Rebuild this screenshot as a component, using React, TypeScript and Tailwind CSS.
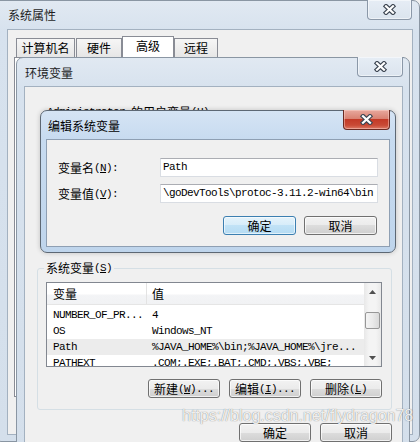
import React from "react";

const cjk = "font-['Noto_Sans_CJK_SC',sans-serif]";
const mono = "font-['Liberation_Mono','Noto_Sans_CJK_SC',monospace] text-[11px] tracking-[-0.6px]";

function XGlyph() {
  return (
    <svg width="13" height="11" viewBox="0 0 13 11">
      <path d="M3 2.2 L10 8.8 M10 2.2 L3 8.8" stroke="#3d4652" strokeWidth="4.4" strokeLinecap="square" />
      <path d="M3 2.2 L10 8.8 M10 2.2 L3 8.8" stroke="#ffffff" strokeWidth="2.2" strokeLinecap="square" />
    </svg>
  );
}

function CloseInactive({ w }: { w: string }) {
  return (
    <div
      className={`-mt-px flex h-[20px] ${w} items-center justify-center rounded-b-[4px] border border-t-0 border-[#8b98a8] bg-[linear-gradient(#e6edf5,#dbe4ee)] shadow-[inset_0_0_0_1px_rgba(255,255,255,0.5)]`}
    >
      <XGlyph />
    </div>
  );
}

function CloseActive() {
  return (
    <div className="-mt-px flex h-[20px] w-[47px] items-center justify-center rounded-b-[4px] border border-t-0 border-[#6a2a22] bg-[linear-gradient(#e8a99e_0%,#d98273_45%,#c33a27_50%,#c94a35_80%,#dd7a66_100%)] shadow-[inset_0_0_0_1px_rgba(255,220,210,0.45)]">
      <XGlyph />
    </div>
  );
}

function Btn({ children, def, w }: { children: React.ReactNode; def?: boolean; w: string }) {
  return (
    <div
      className={`flex h-[19px] ${w} items-center justify-center rounded-[3px] border text-[12px] leading-[14px] text-black ${
        def
          ? "border-[#3c7fb1] bg-[linear-gradient(#e5f3fb_0%,#d6ecf9_50%,#c1e2f6_50%,#b4dbf3_100%)] shadow-[inset_0_0_0_1px_rgba(255,255,255,0.6)]"
          : "border-[#707070] bg-[linear-gradient(#f2f2f2_0%,#ebebeb_50%,#dddddd_50%,#cfcfcf_100%)] shadow-[inset_0_0_0_1px_rgba(255,255,255,0.7)]"
      }`}
    >
      {children}
    </div>
  );
}

function Arrow({ up }: { up?: boolean }) {
  return (
    <div className="flex h-[17px] items-center justify-center">
      <svg width="7" height="4" viewBox="0 0 7 4">
        <path d={up ? "M0 4 L3.5 0 L7 4Z" : "M0 0 L3.5 4 L7 0Z"} fill="#505050" />
      </svg>
    </div>
  );
}

const rows: { name: string; value: string; sel?: boolean }[] = [
  { name: "NUMBER_OF_PR...", value: "4" },
  { name: "OS", value: "Windows_NT" },
  { name: "Path", value: "%JAVA_HOME%\\bin;%JAVA_HOME%\\jre...", sel: true },
  { name: "PATHEXT", value: ".COM;.EXE;.BAT;.CMD;.VBS;.VBE;" },
];

export default function App() {
  return (
    <div className={`relative h-[442px] w-[420px] overflow-hidden bg-[#f0f0f0] text-black ${cjk}`}>
      {/* Window A: 系统属性 */}
      <div className="absolute left-[-6px] top-0 h-[442px] w-[426px] rounded-b-[7px] rounded-tr-[7px] border border-[#8a96a3] bg-[linear-gradient(#e1e9f2,#d7e2ee_30px,#d4dfeb)]">
        <div className="flex h-[28px] items-start justify-between">
          <span className="pl-[13px] pt-[7px] text-[12px] leading-[14px] text-[#1e1e1e]">系统属性</span>
          <div className="mr-[7px]">
            <CloseInactive w="w-[45px]" />
          </div>
        </div>
        <div className="ml-[12px] mr-[6px] h-[406px] border border-[#a3b1c0] bg-[#f0f0f0]">
          <div className="ml-[8px] mt-[6px] flex h-[21px] items-end">
            <div className="flex h-[19px] w-[59px] items-center justify-center border border-b-0 border-[#898c95] bg-[linear-gradient(#f6f6f6,#e6e6e6)] text-[12px] leading-[14px]">
              计算机名
            </div>
            <div className="ml-px flex h-[19px] w-[46px] items-center justify-center border border-b-0 border-[#898c95] bg-[linear-gradient(#f6f6f6,#e6e6e6)] text-[12px] leading-[14px]">
              硬件
            </div>
            <div className="flex h-[21px] w-[52px] items-center justify-center border border-b-0 border-[#898c95] bg-white pb-[2px] text-[12px] leading-[14px]">
              高级
            </div>
            <div className="flex h-[19px] w-[44px] items-center justify-center border border-b-0 border-[#898c95] bg-[linear-gradient(#f6f6f6,#e6e6e6)] text-[12px] leading-[14px]">
              远程
            </div>
          </div>
          <div className="ml-[6px] mr-[8px] h-[340px] border border-[#898c95] bg-white" />
        </div>
      </div>

      {/* Window B: 环境变量 */}
      <div className="absolute left-[16px] top-[57px] h-[420px] w-[394px] rounded-t-[7px] border border-[#8a96a3] bg-[linear-gradient(#e1e9f2,#d7e2ee_30px,#d4dfeb)]">
        <div className="flex h-[28px] items-start justify-between">
          <span className="pl-[8px] pt-[8px] text-[12px] leading-[14px] text-[#1e1e1e]">环境变量</span>
          <div className="mr-[6px]">
            <CloseInactive w="w-[46px]" />
          </div>
        </div>
        <div className="ml-[7px] mr-[6px] h-[400px] border border-[#a3b1c0] bg-[#f0f0f0]">
          <div className="flex h-[14px] items-center pl-[22px] mt-[18px] text-[12px] leading-[14px]">
            <span className={mono}>Administrator&nbsp;</span>
            <span>的用户变量</span>
            <span className={mono}>
              (<span className="underline">U</span>)
            </span>
          </div>
          <div className="relative ml-[12px] mt-[149px] h-[142px] w-[355px] rounded-[3px] border border-[#d5dfe5]">
            <div className="absolute left-[6px] top-[-8px] flex items-center bg-[#f0f0f0] px-[2px] text-[12px] leading-[14px]">
              <span>系统变量</span>
              <span className={mono}>
                (<span className="underline">S</span>)
              </span>
            </div>
            <div className="ml-[8px] mt-[13px] flex h-[85px] w-[336px] overflow-hidden border border-[#828790] bg-white">
              <div className="flex-1 overflow-hidden">
                <div className="flex h-[22px] items-center border-b border-[#e5e5e5] bg-[linear-gradient(#ffffff_0%,#ffffff_50%,#f3f4f6_60%,#f1f2f4_100%)] text-[12px] leading-[14px]">
                  <div className="w-[99px] pl-[6px]">变量</div>
                  <div className="h-full w-px bg-[#e3e3e3]" />
                  <div className="pl-[5px]">值</div>
                </div>
                <div className="pt-[2px]">
                  {rows.map((r) => (
                    <div
                      key={r.name}
                      className={`flex h-[16px] items-center whitespace-nowrap ${mono} leading-[16px] ${r.sel ? "bg-[#ececec]" : ""}`}
                    >
                      <div className="w-[100px] pl-[6px]">{r.name}</div>
                      <div className="pl-[5px]">{r.value}</div>
                    </div>
                  ))}
                </div>
              </div>
              <div className="flex h-full w-[17px] flex-col bg-[linear-gradient(90deg,#e8e8e8,#f4f4f4_30%,#f4f4f4_70%,#e8e8e8)]">
                <Arrow up />
                <div className="h-[12px]" />
                <div className="mx-[1px] h-[17px] rounded-[2px] border border-[#979797] bg-[linear-gradient(90deg,#f4f4f4,#eaeaea_50%,#d9d9d9)]" />
                <div className="flex-1" />
                <Arrow />
              </div>
            </div>
            <div className="mt-[12px] flex justify-end gap-[9px] pr-[9px]">
              <Btn w="w-[72px]">
                <span>新建</span>
                <span className={mono}>
                  (<span className="underline">W</span>)...
                </span>
              </Btn>
              <Btn w="w-[72px]">
                <span>编辑</span>
                <span className={mono}>
                  (<span className="underline">I</span>)...
                </span>
              </Btn>
              <Btn w="w-[72px]">
                <span>删除</span>
                <span className={mono}>
                  (<span className="underline">L</span>)
                </span>
              </Btn>
            </div>
          </div>
          <div className="mt-[13px] flex justify-end gap-[9px] pr-[10px]">
            <Btn w="w-[72px]">确定</Btn>
            <Btn w="w-[72px]">取消</Btn>
          </div>
        </div>
      </div>

      {/* Window C: 编辑系统变量 (active) */}
      <div className="absolute left-[40px] top-[110px] h-[143px] w-[356px] rounded-[7px] border border-[#5d6874] bg-[linear-gradient(#d5e4f4,#c7dbf0_28px,#bfd5ec)] shadow-[0_0_5px_rgba(0,0,0,0.2)]">
        <div className="flex h-[28px] items-start justify-between">
          <span className="pl-[7px] pt-[8px] text-[12px] leading-[14px] text-black">编辑系统变量</span>
          <div className="mr-[5px]">
            <CloseActive />
          </div>
        </div>
        <div className="ml-[5px] mr-[5px] h-[108px] border border-[#8e9fb3] bg-[#f0f0f0]">
          <div className="flex items-center pl-[11px] pt-[18px]">
            <div className="flex w-[102px] items-center text-[12px] leading-[14px]">
              <span>变量名</span>
              <span className={mono}>
                (<span className="underline">N</span>):
              </span>
            </div>
            <div className={`flex h-[19px] w-[218px] items-center border border-[#d9dde3] border-t-[#abadb3] bg-white pl-[2px] ${mono}`}>
              Path
            </div>
          </div>
          <div className="mt-[7px] flex items-center pl-[11px]">
            <div className="flex w-[102px] items-center text-[12px] leading-[14px]">
              <span>变量值</span>
              <span className={mono}>
                (<span className="underline">V</span>):
              </span>
            </div>
            <div className={`flex h-[19px] w-[218px] items-center overflow-hidden whitespace-nowrap border border-[#d9dde3] border-t-[#abadb3] bg-white pl-[2px] ${mono}`}>
              \goDevTools\protoc-3.11.2-win64\bin
            </div>
          </div>
          <div className="mt-[13px] flex justify-end gap-[8px] pr-[12px]">
            <Btn def w="w-[73px]">确定</Btn>
            <Btn w="w-[73px]">取消</Btn>
          </div>
        </div>
      </div>

      {/* Watermark */}
      <div className="pointer-events-none absolute left-[182px] top-[407px] font-['Liberation_Sans',sans-serif] text-[16px] leading-[18px] text-[rgba(255,255,255,0.9)] [text-shadow:0_0_1px_rgba(80,80,80,0.85)]">
        https://blog.csdn.net/flydragon78
      </div>
    </div>
  );
}
